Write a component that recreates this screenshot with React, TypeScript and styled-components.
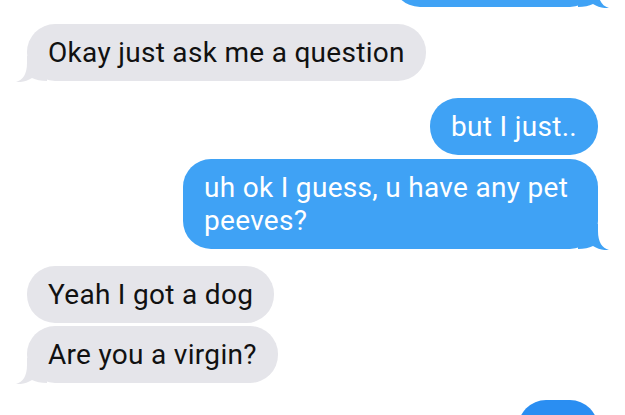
import React from "react";
import styled, { createGlobalStyle } from "styled-components";

const Global = createGlobalStyle`
  html, body {
    margin: 0;
    padding: 0;
    background: #ffffff;
    overflow: hidden;
  }
  body {
    width: 625px;
    height: 415px;
  }
`;

const Thread = styled.div`
  display: flex;
  flex-direction: column;
  gap: 17px;
  margin-top: -50px;
  padding: 0 27px 0 27px;
  font-family: Roboto, "Liberation Sans", Arial, sans-serif;
`;

const Group = styled.div<{ $mine?: boolean }>`
  display: flex;
  flex-direction: column;
  align-items: ${(p) => (p.$mine ? "flex-end" : "flex-start")};
  gap: 3.5px;
`;

const Bubble = styled.div<{ $mine?: boolean; $tone?: string }>`
  position: relative;
  box-sizing: border-box;
  max-width: 415px;
  padding: 12px 21px;
  border-radius: 28px;
  font-size: 28px;
  line-height: 33px;
  letter-spacing: 0.3px;
  background: ${(p) => p.$tone ?? (p.$mine ? "#3fa2f5" : "#e5e5ea")};
  color: ${(p) => (p.$mine ? "#ffffff" : "#111111")};
`;

const TailSvg = styled.svg<{ $mine?: boolean }>`
  position: absolute;
  bottom: -1px;
  width: 31px;
  height: 26px;
  ${(p) =>
    p.$mine
      ? "right: -11px;"
      : "left: -11px; transform: scaleX(-1);"}
`;

function Tail({ mine, color }: { mine?: boolean; color: string }) {
  return (
    <TailSvg $mine={mine} viewBox="-20 -25 31 26" aria-hidden="true">
      <path
        d="M -20 -25 L 0 -25 L 0 -18 C 0 -7, 4 -1, 11 1 C 5 1.5, 0 0, -5 -3 C -9 -1, -14 0, -20 0 Z"
        fill={color}
      />
    </TailSvg>
  );
}

type Msg = { text: string; tail?: boolean; tone?: string };

function Message({ mine, msg }: { mine?: boolean; msg: Msg }) {
  const color = msg.tone ?? (mine ? "#3fa2f5" : "#e5e5ea");
  return (
    <Bubble $mine={mine} $tone={msg.tone}>
      {msg.tail && <Tail mine={mine} color={color} />}
      {msg.text}
    </Bubble>
  );
}

const groups: { mine: boolean; msgs: Msg[] }[] = [
  { mine: true, msgs: [{ text: "what u mean", tail: true }] },
  { mine: false, msgs: [{ text: "Okay just ask me a question", tail: true }] },
  {
    mine: true,
    msgs: [
      { text: "but I just.." },
      { text: "uh ok I guess, u have any pet peeves?", tail: true },
    ],
  },
  {
    mine: false,
    msgs: [
      { text: "Yeah I got a dog" },
      { text: "Are you a virgin?", tail: true },
    ],
  },
  { mine: true, msgs: [{ text: "Idk", tone: "#2a8ef2" }] },
];

export default function App() {
  return (
    <>
      <Global />
      <Thread>
        {groups.map((g, i) => (
          <Group key={i} $mine={g.mine}>
            {g.msgs.map((m, j) => (
              <Message key={j} mine={g.mine} msg={m} />
            ))}
          </Group>
        ))}
      </Thread>
    </>
  );
}
